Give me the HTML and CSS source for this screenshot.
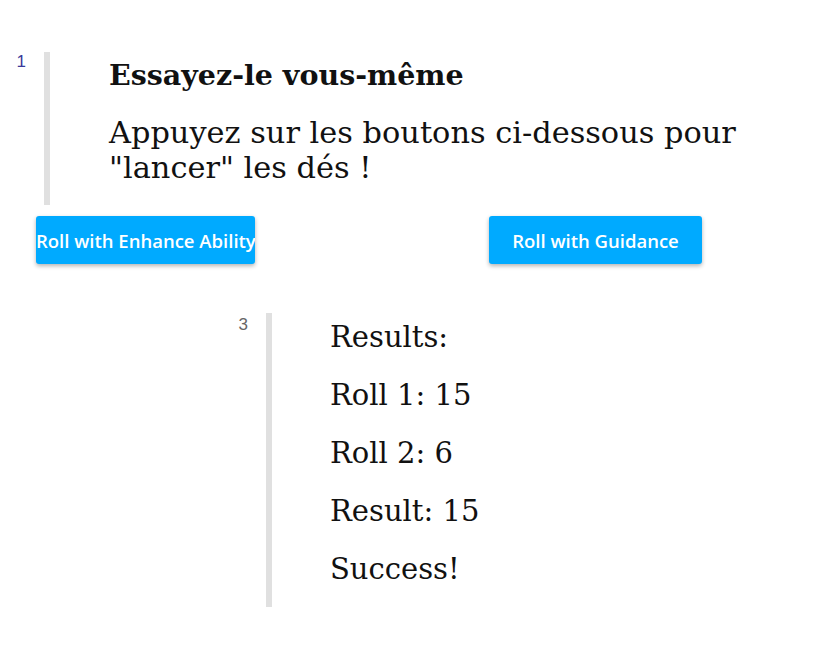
FILE: index.html
```html
<!DOCTYPE html>
<html lang="fr">
<head>
    <meta charset="UTF-8">
    <title>Essayez-le vous-même</title>
    <link rel="stylesheet" href="styles.css">
</head>
<body>
    <div class="cell intro">
        <div class="gutter num-blue">1</div>
        <div class="bar"></div>
        <div class="content">
            <h2>Essayez-le vous-même</h2>
            <p>Appuyez sur les boutons ci-dessous pour "lancer" les dés !</p>
        </div>
    </div>

    <div class="buttons">
        <button class="roll roll-enhance" type="button">Roll with Enhance Ability</button>
        <button class="roll roll-guidance" type="button">Roll with Guidance</button>
    </div>

    <div class="cell results">
        <div class="gutter num-grey">3</div>
        <div class="bar"></div>
        <div class="content">
            <p>Results:</p>
            <p>Roll 1: 15</p>
            <p>Roll 2: 6</p>
            <p>Result: 15</p>
            <p>Success!</p>
        </div>
    </div>
</body>
</html>
```

FILE: styles.css
```css
body { margin: 0; background: #fff; color: #111; font-family: "DejaVu Serif", serif; }
.cell { display: flex; }
.gutter { font-family: "Liberation Sans", sans-serif; font-size: 17px; width: 26px; text-align: right; }
.num-blue { color: #3a3a9a; }
.num-grey { color: #666; }
.bar { width: 6px; margin-left: 18px; background: #e0e0e0; }
.intro { margin-top: 52px; }
.intro .bar { height: 153px; }
.intro .content { padding-left: 59px; }
.intro h2 { margin: 0; padding-top: 6px; font-size: 28.5px; font-weight: bold; line-height: 34px; }
.intro p { margin: 23px 0 0; font-size: 30.4px; line-height: 35px; width: 680px; }

.buttons { display: flex; margin-top: 11px; padding-left: 36px; }
.roll { height: 48px; border: none; border-radius: 3px; background: #00aaff; color: #fff; font-family: "Open Sans", sans-serif; font-weight: 600; font-size: 18.5px; box-shadow: 0 2px 4px rgba(0,0,0,0.3); padding: 0; white-space: nowrap; overflow: hidden; }
.roll-enhance { width: 219px; }
.roll-guidance { width: 213px; margin-left: 234px; }

.results { margin-top: 49px; padding-left: 222px; }
.results .bar { height: 294px; }
.results .gutter { padding-top: 2px; }
.results .content { padding-left: 58px; margin-top: -5px; }
.results p { margin: 0; font-size: 29px; line-height: 58px; }
```
